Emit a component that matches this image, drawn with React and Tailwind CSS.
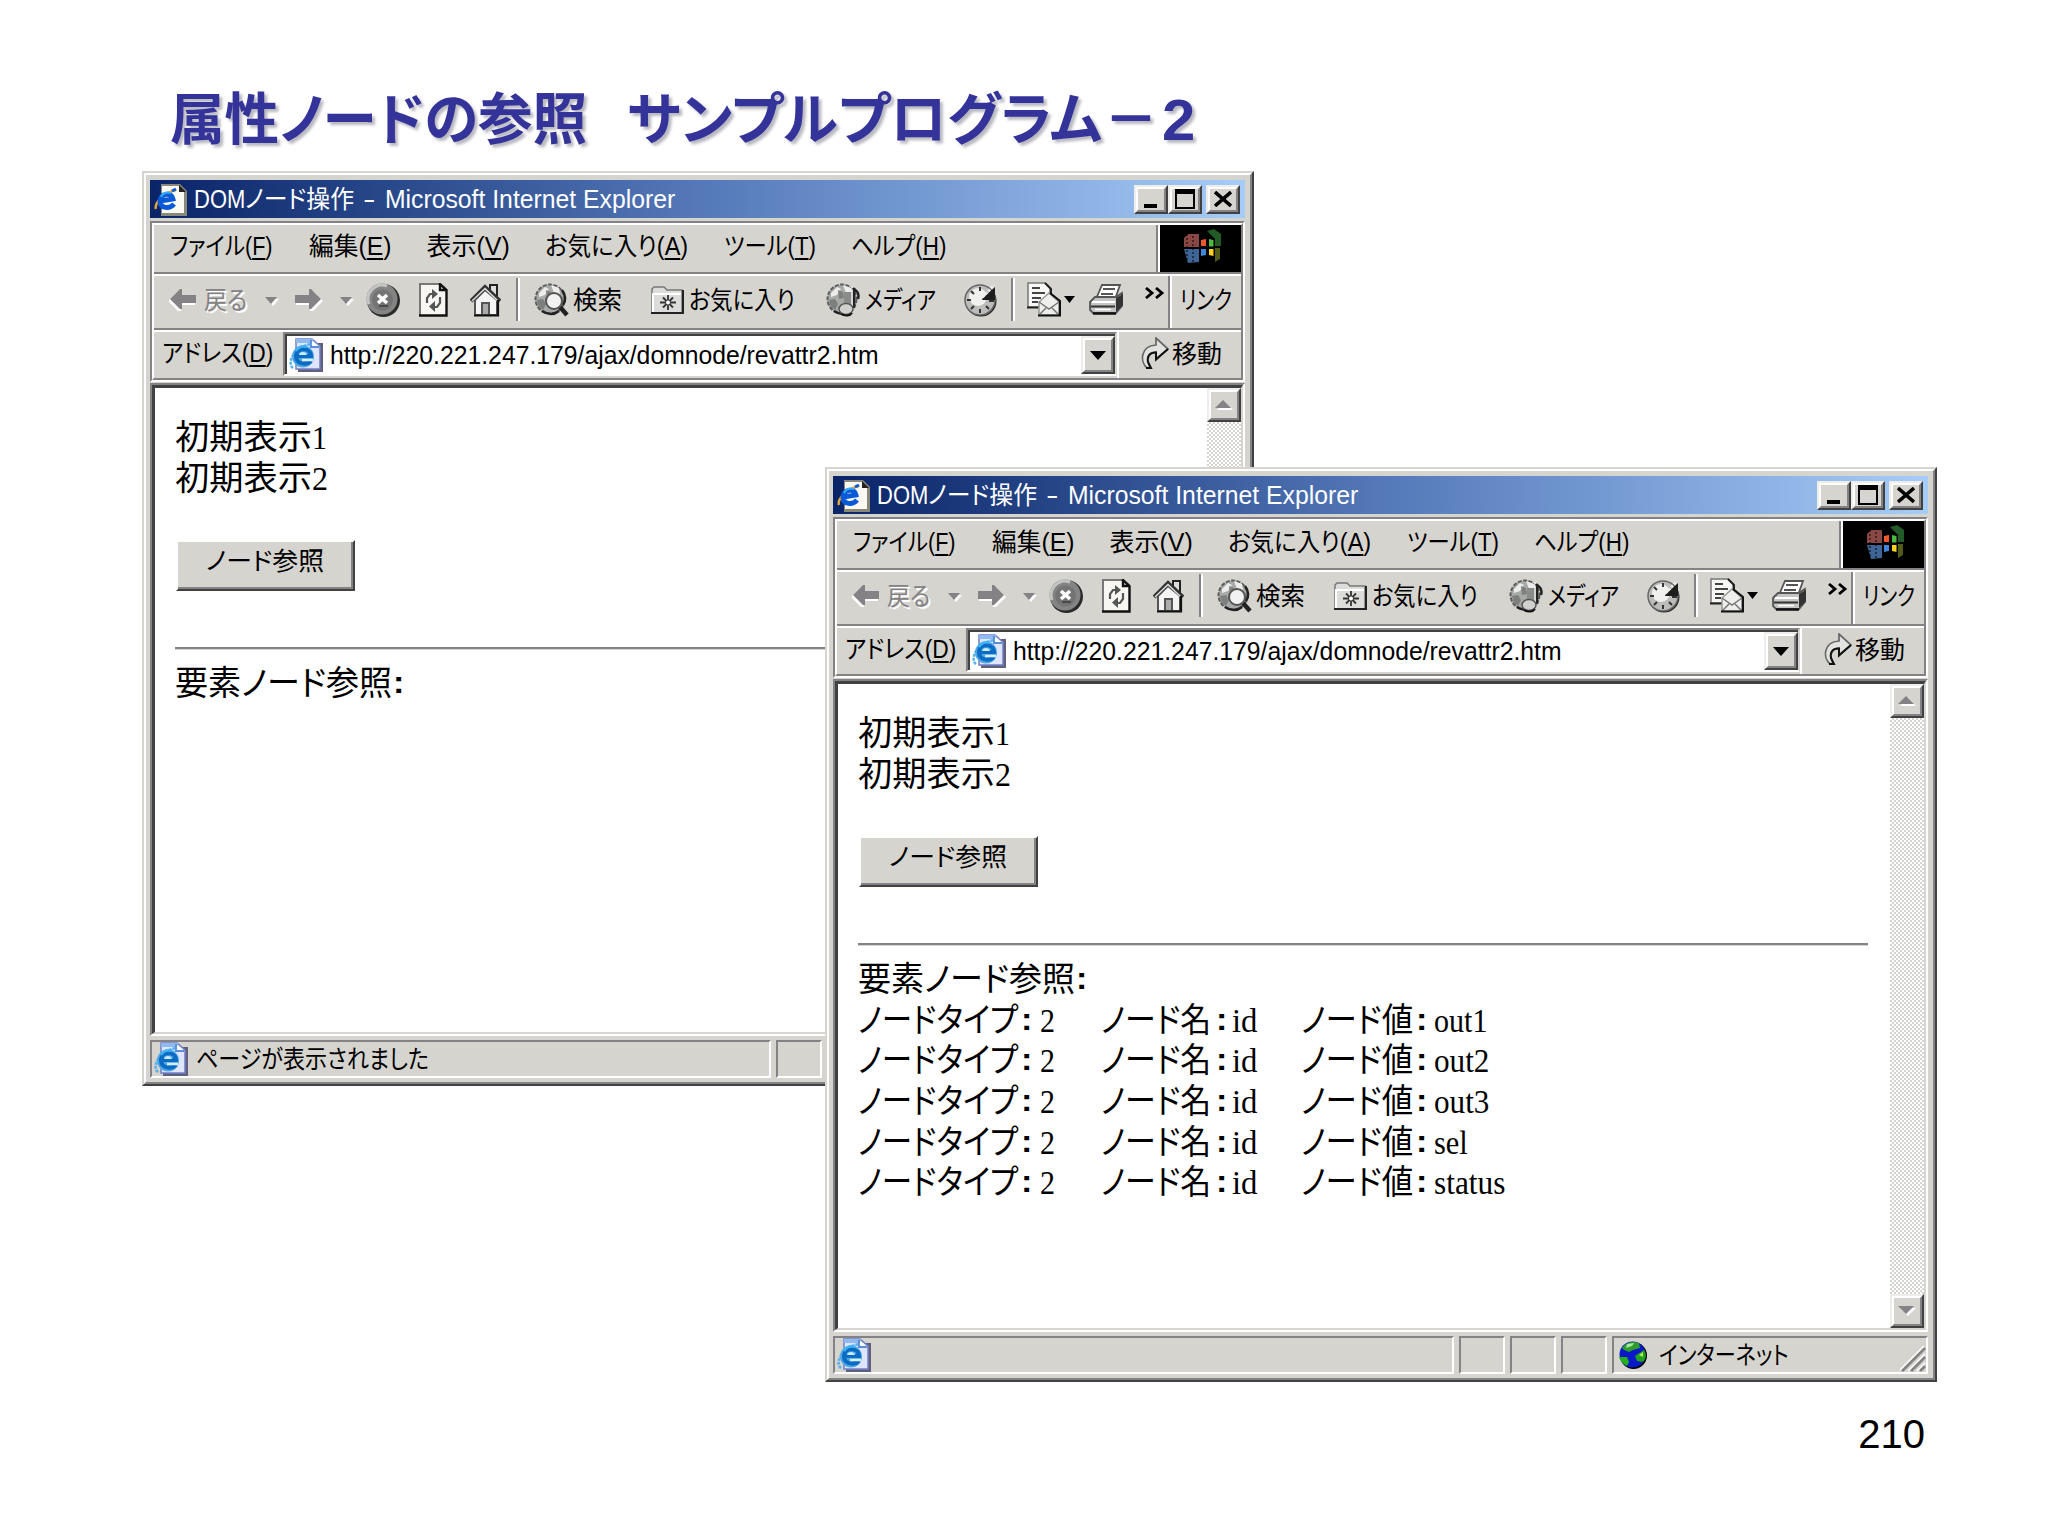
import { useLayoutEffect, useRef, useState } from 'react'

// stretches one run of text to a fixed width, like the narrow UI font does
function Fit({ w, className = '', children }) {
  const ref = useRef(null)
  const [scale, setScale] = useState(1)

  useLayoutEffect(() => {
    if (ref.current.offsetWidth) setScale(w / ref.current.offsetWidth)
  }, [w])

  return (
    <span className={`block shrink-0 whitespace-nowrap ${className}`} style={{ width: w }}>
      <span
        ref={ref}
        className="inline-block origin-left [font-feature-settings:'palt']"
        style={{ transform: `scaleX(${scale})` }}
      >
        {children}
      </span>
    </span>
  )
}

function Key({ children }) {
  return <span className="underline decoration-2 underline-offset-[3px]">{children}</span>
}

/* ---------- icons ---------- */

function PageIcon({ className = '' }) {
  return (
    <svg className={`shrink-0 ${className}`} width="34" height="34" viewBox="0 0 34 34">
      <path d="M9 5H34V34H9Z" fill="#625f78" />
      <path d="M7 1H23L31 8V31H7Z" fill="#dfe4ff" stroke="#6f7fc8" strokeWidth="1.5" />
      <path d="M7 1H24V5H7Z" fill="#8fbaf0" />
      <path d="M22 2V9H30" fill="#fff" stroke="#5a8fd6" strokeWidth="2" />
      <path d="M4 30C-2 26 3 9 23 6" fill="none" stroke="#58b0ee" strokeWidth="2.5" strokeDasharray="3 1" />
      <circle cx="14" cy="18.5" r="11" fill="#4fa8e6" />
      <path d="M7 18H22C22 9 7 9 7 18C7 27 18 27 22 23" fill="none" stroke="#0c6cc4" strokeWidth="4" />
      <path d="M10 17H18C17 13 11 13 10 17Z" fill="#c8ecff" />
      <path d="M13 22H24" stroke="#d4f0ff" strokeWidth="2.5" />
      <path d="M7 13C9 9 14 7 18 9" fill="none" stroke="#3cb4f4" strokeWidth="2.5" />
    </svg>
  )
}

function TitleIcon({ className = '' }) {
  return (
    <svg className={`shrink-0 ${className}`} width="34" height="34" viewBox="0 0 34 34">
      <path d="M7 1H26L33 8V33H7Z" fill="#8a8878" />
      <path d="M8 3H25V9H30V30H8Z" fill="#fbfaf2" />
      <path d="M25 2L32 9H25Z" fill="#222" />
      <path d="M2 26C0 20 10 10 22 7" fill="none" stroke="#e0a63c" strokeWidth="2.5" />
      <path d="M6 18L19 16C18 9 6 10 6 18C6 26 16 26 20 21" fill="none" stroke="#0a5ad8" strokeWidth="5" />
      <path d="M7 14C9 10 13 9 17 10" fill="none" stroke="#35b0f8" strokeWidth="2" />
      <path d="M18 8L22 6" stroke="#0a5ad8" strokeWidth="3" />
    </svg>
  )
}

function Arrow({ left, className = '' }) {
  return (
    <svg className={`shrink-0 ${className}`} width="28" height="24" viewBox="0 0 28 24">
      <g transform={left ? 'translate(27 0) scale(-1 1)' : undefined}>
        <path d="M1 9H15V3H18L28 13L18 23H15V17H1Z" fill="#fff" />
        <path d="M0 7H14V1H16L26 11L16 21H14V15H0Z" fill="#848284" />
      </g>
    </svg>
  )
}

function Drop({ className = '' }) {
  return (
    <svg className={`shrink-0 ${className}`} width="14" height="9" viewBox="0 0 14 9">
      <path d="M2 2H14L8 9Z" fill="#fff" />
      <path d="M0 0H12L6 7Z" fill="#848284" />
    </svg>
  )
}

function StopIcon() {
  return (
    <svg className="ml-3 shrink-0" width="34" height="34" viewBox="0 0 34 34">
      <circle cx="17.5" cy="17.5" r="16.5" fill="#2a2a2a" />
      <circle cx="16" cy="16" r="15.5" fill="#848484" />
      <path d="M3 21A14 14 0 0 1 21 3" fill="none" stroke="#c4c4c4" strokeWidth="3" />
      <circle cx="16.5" cy="17" r="10.5" fill="#747474" />
      <path d="M12 12L21 20M21 12L12 20" stroke="#fff" strokeWidth="3.5" />
      <path d="M13 23H22" stroke="#4a4a4a" strokeWidth="2" />
    </svg>
  )
}

function RefreshIcon() {
  return (
    <svg className="ml-[19px] shrink-0" width="29" height="34" viewBox="0 0 29 34">
      <path d="M1 1H21L27 7V32H1Z" fill="#f7f6f2" />
      <path d="M1 33V1H21" fill="none" stroke="#777" strokeWidth="2" />
      <path d="M0 32.5H27.5V7L21 1V7H27" fill="none" stroke="#111" strokeWidth="2.4" />
      <path d="M8 20V15L11 11H14" fill="none" stroke="#555" strokeWidth="2.2" />
      <path d="M13 6L19 11L13 16Z" fill="#555" />
      <path d="M21 14V20L18 24H15" fill="none" stroke="#555" strokeWidth="2.2" />
      <path d="M16 18L10 23.5L16 29Z" fill="#555" />
    </svg>
  )
}

function HomeIcon() {
  return (
    <svg className="ml-[22px] shrink-0" width="31" height="34" viewBox="0 0 31 34">
      <path d="M20 2H27V14H20Z" fill="#ddd" stroke="#222" strokeWidth="2" />
      <path d="M5 17L15 7L27 17V32H5Z" fill="#f4f4f4" stroke="#555" strokeWidth="2" />
      <path d="M1 18L15 4L30 18" fill="none" stroke="#333" strokeWidth="4" />
      <path d="M2 18L15 5.5L28 18" fill="none" stroke="#ddd" strokeWidth="1.5" />
      <path d="M12 20H19V32H12Z" fill="#aaa" stroke="#555" strokeWidth="2" />
      <path d="M4 32.5H28V17" fill="none" stroke="#111" strokeWidth="2.2" />
    </svg>
  )
}

function Globe() {
  return (
    <>
      <circle cx="16" cy="17" r="14.5" fill="#a8aaa7" stroke="#5c5c5c" strokeWidth="2" strokeDasharray="4 1.5" />
      <path d="M5 11L11 5L15 7L11 13L5 15ZM17 3L25 6L26 12L20 11Z" fill="#ececea" />
      <path d="M3 18L9 17L12 22L9 28L5 25Z" fill="#7c7f7d" />
      <path d="M12 8L17 10L18 16L13 17Z" fill="#7d807d" />
      <path d="M8 29C14 33 20 33 25 29" fill="none" stroke="#222" strokeWidth="2.5" />
    </>
  )
}

function SearchIcon() {
  return (
    <svg className="ml-3.5 shrink-0" width="35" height="35" viewBox="0 0 35 35">
      <Globe />
      <path d="M26 25L33 33" stroke="#222" strokeWidth="4.5" />
      <circle cx="20" cy="19" r="8" fill="#f2f2f2" stroke="#555" strokeWidth="2" />
      <path d="M28 8C32 13 32 19 29 23" fill="none" stroke="#222" strokeWidth="2.5" />
    </svg>
  )
}

function FolderIcon() {
  return (
    <svg className="ml-[29px] shrink-0" width="33" height="28" viewBox="0 0 33 28">
      <path d="M1 27V3L3 1H13L16 4H31V27Z" fill="#dcdcda" stroke="#777" strokeWidth="1.5" />
      <path d="M2 26V8H30" fill="none" stroke="#fff" strokeWidth="2" />
      <path d="M0 27H32V4" fill="none" stroke="#222" strokeWidth="2" />
      <path d="M17 9V24M9 16.5H25M12 11.5L22 21.5M22 11.5L12 21.5" stroke="#333" strokeWidth="1.8" />
      <circle cx="17" cy="16.5" r="2" fill="#fff" />
    </svg>
  )
}

function MediaIcon() {
  return (
    <svg className="ml-[31px] shrink-0" width="35" height="35" viewBox="0 0 35 35">
      <Globe />
      <path d="M18 10H26V24H18Z" fill="#8a8c8a" />
      <path d="M28 6V26" stroke="#222" strokeWidth="2.5" />
      <path d="M26 4V26" stroke="#eee" strokeWidth="1.5" />
      <path d="M27 6C29 9 34 9 32 17" fill="none" stroke="#222" strokeWidth="2.5" />
      <ellipse cx="20" cy="27" rx="7" ry="5.5" fill="#d0d0cd" stroke="#555" strokeWidth="1.5" />
      <path d="M15 32C19 34.5 24 34 26 31" fill="none" stroke="#111" strokeWidth="2" />
    </svg>
  )
}

function HistoryIcon() {
  return (
    <svg className="ml-7 shrink-0" width="34" height="34" viewBox="0 0 34 34">
      <circle cx="17" cy="18" r="15.5" fill="#222" />
      <circle cx="16" cy="17" r="15" fill="#bcbcba" stroke="#666" strokeWidth="1.5" />
      <circle cx="14" cy="14" r="9" fill="#f0f0ee" />
      <path d="M16 4V8M3 17H7M16 26V30M25 18H30M7 8L10 11M7 26L10 23M25 26L22 23" stroke="#333" strokeWidth="2" />
      <path d="M17 17L31 4V17Z" fill="#1d1d1d" />
      <path d="M16 17L30 2" stroke="#eee" strokeWidth="2.5" strokeDasharray="2.5 1.5" />
    </svg>
  )
}

function MailIcon() {
  return (
    <svg className="ml-3 shrink-0" width="34" height="35" viewBox="0 0 34 35">
      <path d="M1 1H18L23 6V25H1Z" fill="#f7f7f5" stroke="#777" strokeWidth="1.5" />
      <path d="M0 25.5H12M18 1L24 7V12" fill="none" stroke="#222" strokeWidth="2" />
      <path d="M5 6H13M5 11H18M5 16H14M5 20H11" stroke="#444" strokeWidth="2" />
      <path d="M12 33V20L22 11L32 20V33Z" fill="#eeeeec" stroke="#999" strokeWidth="1.5" />
      <path d="M12 20L22 27L32 20M12 33L19 26M32 33L25 26" fill="none" stroke="#777" strokeWidth="1.5" />
      <path d="M11 33.5H33V19L23 11" fill="none" stroke="#111" strokeWidth="2.2" />
    </svg>
  )
}

function PrinterIcon() {
  return (
    <svg className="ml-3.5 shrink-0" width="35" height="31" viewBox="0 0 35 31">
      <path d="M7 15L13 1H31L26 15Z" fill="#fff" stroke="#555" strokeWidth="1.8" />
      <path d="M14 5H26M12 10H24" stroke="#555" strokeWidth="1.8" />
      <path d="M1 18L6 13H27L33 9V22L27 29H4L1 26Z" fill="#c4c4c2" stroke="#555" strokeWidth="1.8" />
      <path d="M27 14L34 10V21L27 28Z" fill="#333" />
      <path d="M3 18H26" stroke="#fff" strokeWidth="2" />
      <path d="M2 22.5H26" stroke="#333" strokeWidth="2" />
      <path d="M6 25.5H22" stroke="#fff" strokeWidth="1.5" />
      <path d="M4 29.5H27" stroke="#111" strokeWidth="2.5" />
    </svg>
  )
}

function GoIcon() {
  return (
    <svg className="ml-[21px] shrink-0" width="29" height="33" viewBox="0 0 29 33">
      <path
        d="M7 31C0 25 0 9 16 8V1L28 12L16 22V15C9 15 7 20 8 25L10 31Z"
        fill="#e2e2e0"
        stroke="#666"
        strokeWidth="1.7"
      />
      <path d="M28 12L16 22.5V15.5C9 15.5 7 20 8 25L11 31H6" fill="none" stroke="#111" strokeWidth="2" />
    </svg>
  )
}

function Flag() {
  return (
    <svg width="81" height="47" viewBox="0 0 81 47">
      <g opacity="0.75">
        <path d="M24 13L28 9L39 9V22H24Z" fill="#b8605c" />
        <path d="M24 24H39V37L28 38Z" fill="#5486c8" />
        <path d="M47 6L54 4L61 9V21H55V14Z" fill="#2f7a34" />
        <path d="M55 23H60V34L55 37Z" fill="#6f7a20" />
      </g>
      <path d="M27 9V38M33 7V39" stroke="#000" strokeWidth="1" strokeDasharray="2 2" />
      <path d="M39 14C44 9 50 11 55 14V35C50 32 44 32 39 35Z" fill="#000" />
      <path d="M41 15L46 14V21H41Z" fill="#f2582e" />
      <path d="M49 14L53.5 15V21.5H49Z" fill="#4cba3e" />
      <path d="M41 24H46V30L41 31Z" fill="#3f86dd" />
      <path d="M49 24H53.5V31L49 30Z" fill="#ffd21e" />
    </svg>
  )
}

function EarthIcon() {
  return (
    <svg className="ml-[5px] shrink-0" width="28" height="28" viewBox="0 0 28 28">
      <circle cx="14.5" cy="14.5" r="13.5" fill="#000" />
      <circle cx="13.5" cy="13.5" r="13" fill="#0a18c8" />
      <path d="M3 7C7 1 14 0 20 2L21 7L14 9L10 11L5 9Z" fill="#2f9d2c" />
      <path d="M8 3L15 2L13 5L7 7Z" fill="#a6e8a0" />
      <path d="M25 9C28 13 27 18 24 21L18 20L16 15Z" fill="#1fa31c" />
      <path d="M0 16L8 16L10 21L8 25C4 23 1 20 0 16Z" fill="#25b020" />
      <path d="M20 14L24 11V16Z" fill="#b8e84a" />
    </svg>
  )
}

/* ---------- window parts ---------- */

function Bevel({ className = '', children }) {
  return (
    <div className={`flex shrink-0 border-2 border-[#efedea] border-r-[#424142] border-b-[#424142] bg-[#d6d4cf] ${className}`}>
      <div className="flex flex-1 items-center justify-center border-2 border-white border-r-[#848284] border-b-[#848284]">
        {children}
      </div>
    </div>
  )
}

function Separator({ className }) {
  return <div className={`h-[43px] w-1 shrink-0 border-l-2 border-r-2 border-l-[#848284] border-r-white ${className}`} />
}

function TitleBar() {
  return (
    <div className="flex h-[38px] items-center bg-linear-to-r from-[#0a2468] via-[#5478b8] via-50% to-[#a6ccf8] pr-[5px] pl-1 text-[25px] text-white">
      <TitleIcon className="mt-0.5" />
      <Fit w={51} className="ml-1.5">DOM</Fit>
      <Fit w={109}>ノード操作</Fit>
      <Fit w={12} className="ml-[9px]">-</Fit>
      <Fit w={290} className="ml-2.5">Microsoft Internet Explorer</Fit>
      <Bevel className="ml-auto h-[29px] w-[34px]">
        <div className="mt-3.5 mr-0.5 h-1 w-[13px] bg-black" />
      </Bevel>
      <Bevel className="h-[29px] w-[34px]">
        <div className="h-5 w-5 border-2 border-t-[5px] border-black" />
      </Bevel>
      <Bevel className="ml-1 h-[29px] w-[34px]">
        <svg width="18" height="16" viewBox="0 0 18 16">
          <path d="M1 1L17 15M17 1L1 15" stroke="#000" strokeWidth="3.5" />
        </svg>
      </Bevel>
    </div>
  )
}

const MENU = [
  ['ファイル', 'F', 103],
  ['編集', 'E', 82],
  ['表示', 'V', 83],
  ['お気に入り', 'A', 143],
  ['ツール', 'T', 92],
  ['ヘルプ', 'H', 95],
]

function MenuBar() {
  return (
    <div className="flex h-[49px] border-b-2 border-[#848284] shadow-[0_2px_0_#fff]">
      <div className="flex flex-1 items-center gap-[35.7px] border-r-2 border-[#848284] pb-1.5 pl-4">
        {MENU.map(([label, key, w]) => (
          <Fit key={key} w={w}>
            {label}(<Key>{key}</Key>)
          </Fit>
        ))}
      </div>
      <div className="w-[83px] border-l-2 border-white bg-black">
        <Flag />
      </div>
    </div>
  )
}

function ToolBar() {
  return (
    <div className="mt-0.5 flex h-[54px] border-b-2 border-[#848284] shadow-[0_2px_0_#fff]">
      <div className="flex w-[1016px] items-center border-r-2 border-[#848284] pb-[5px]">
        <Arrow left className="ml-[15px]" />
        <Fit w={43} className="ml-[7px] text-[#848284] [text-shadow:2px_2px_0_#fff]">戻る</Fit>
        <Drop className="mt-1 ml-[18px]" />
        <Arrow className="ml-4" />
        <Drop className="mt-1 ml-[17px]" />
        <StopIcon />
        <RefreshIcon />
        <HomeIcon />
        <Separator className="ml-[15px]" />
        <SearchIcon />
        <Fit w={49} className="ml-1">検索</Fit>
        <FolderIcon />
        <Fit w={106} className="ml-[5px]">お気に入り</Fit>
        <MediaIcon />
        <Fit w={71} className="ml-1">メディア</Fit>
        <HistoryIcon />
        <Separator className="ml-[13px]" />
        <MailIcon />
        <svg className="ml-[3px] shrink-0" width="11" height="7" viewBox="0 0 11 7">
          <path d="M0 0H11L5.5 7Z" fill="#000" />
        </svg>
        <PrinterIcon />
        <svg className="mb-3.5 ml-[21px] shrink-0" width="20" height="12" viewBox="0 0 20 12">
          <path d="M1 1L7 6L1 11M11 1L17 6L11 11" fill="none" stroke="#000" strokeWidth="2.8" />
        </svg>
      </div>
      <div className="flex flex-1 items-center border-l-2 border-white pb-[5px] pl-2">
        <Fit w={52}>リンク</Fit>
      </div>
    </div>
  )
}

function AddressBar() {
  return (
    <div className="mt-0.5 flex h-[46px] items-start">
      <Fit w={111} className="mt-1 ml-2">
        アドレス(<Key>D</Key>)
      </Fit>
      <div className="ml-2.5 flex h-11 w-[834px] shrink-0 items-center border-2 border-[#848284] border-r-[#d6d4cf] border-b-white bg-white">
        <div className="flex h-10 flex-1 items-center border-t-2 border-l-2 border-[#424142]">
          <PageIcon className="ml-0.5" />
          <Fit w={549} className="ml-[7px]">http://220.221.247.179/ajax/domnode/revattr2.htm</Fit>
          <Bevel className="ml-auto h-[38px] w-[34px]">
            <svg width="16" height="9" viewBox="0 0 16 9">
              <path d="M0 0H16L8 9Z" fill="#000" />
            </svg>
          </Bevel>
        </div>
      </div>
      <div className="flex h-[46px] flex-1 items-center border-l-2 border-white pb-[3px]">
        <GoIcon />
        <Fit w={50} className="ml-[3px]">移動</Fit>
      </div>
    </div>
  )
}

function ScrollBar() {
  return (
    <div className="flex w-[34px] shrink-0 flex-col justify-between bg-[repeating-conic-gradient(#ffffff_0_25%,#d6d4cf_0_50%)] bg-[length:4px_4px]">
      <Bevel className="h-[34px] w-[34px]">
        <svg width="18" height="12" viewBox="0 0 18 12">
          <path d="M2 11L10 3L18 11Z" fill="#fff" />
          <path d="M0 9L8 1L16 9Z" fill="#848284" />
        </svg>
      </Bevel>
      <Bevel className="h-[34px] w-[34px]">
        <svg width="18" height="12" viewBox="0 0 18 12">
          <path d="M2 3H18L10 11Z" fill="#fff" />
          <path d="M0 1H16L8 9Z" fill="#848284" />
        </svg>
      </Bevel>
    </div>
  )
}

function Latin({ w, className = '', children }) {
  return (
    <Fit w={w} className={`translate-y-px [font-family:'Liberation_Serif',serif] ${className}`}>
      {children}
    </Fit>
  )
}

function Colon({ className }) {
  return <Fit w={11} className={`text-[31px] font-bold ${className}`}>:</Fit>
}

function Row({ value: [text, w] }) {
  return (
    <div className="flex">
      <Fit w={160}>ノードタイプ</Fit>
      <Colon className="ml-[3px]" />
      <Latin w={15} className="ml-2">2</Latin>
      <Fit w={110} className="ml-[46px]">ノード名</Fit>
      <Colon className="ml-[5px]" />
      <Latin w={25} className="ml-[5px]">id</Latin>
      <Fit w={112} className="ml-[44px]">ノード値</Fit>
      <Colon className="ml-[3px]" />
      <Latin w={w} className="ml-[7px]">{text}</Latin>
    </div>
  )
}

function Page({ rows }) {
  return (
    <div className="flex-1 pt-[29px] pl-5 text-[34px] leading-[40.6px]">
      <div className="flex">
        <Fit w={137}>初期表示</Fit>
        <Latin w={15}>1</Latin>
      </div>
      <div className="flex">
        <Fit w={137}>初期表示</Fit>
        <Latin w={16}>2</Latin>
      </div>
      <div className="mt-[42px] ml-px flex h-[51px] w-[179px] border-2 border-white border-r-[#424142] border-b-[#424142] bg-[#d6d4cf]">
        <div className="flex flex-1 justify-center border-r-2 border-b-2 border-[#848284]">
          <Fit w={118} className="text-[25px] leading-[38px]">ノード参照</Fit>
        </div>
      </div>
      <div className="mt-14 h-[3px] w-[1010px] border-t-2 border-[#848284] bg-[#d6d4cf]" />
      <div className="mt-[13px] flex">
        <Fit w={217}>要素ノード参照</Fit>
        <Colon className="ml-px" />
      </div>
      {rows.map((value) => (
        <Row key={value[0]} value={value} />
      ))}
    </div>
  )
}

function Pane({ className, children }) {
  return (
    <div className={`flex h-[38px] shrink-0 items-center border-2 border-[#848284] border-r-white border-b-white ${className}`}>
      {children}
    </div>
  )
}

function StatusBar({ message, zone }) {
  return (
    <div className="mt-1 flex">
      <Pane className="w-[621px] pl-0.5">
        <PageIcon />
        {message && <Fit w={233} className="ml-2">{message}</Fit>}
      </Pane>
      <Pane className="ml-[5px] w-[46px]" />
      <Pane className="ml-[5px] w-[46px]" />
      <Pane className="ml-[5px] w-[46px]" />
      <Pane className="ml-[5px] w-[316px]">
        {zone && (
          <>
            <EarthIcon />
            <Fit w={130} className="ml-3">{zone}</Fit>
          </>
        )}
        <svg className="ml-auto self-end" width="26" height="26" viewBox="0 0 26 26">
          <path d="M2 25L25 2M11 25L25 11M20 25L25 20" stroke="#848284" strokeWidth="3" />
          <path d="M0 24L24 0M8 25L25 8M17 25L25 17" stroke="#fff" strokeWidth="1.5" />
        </svg>
      </Pane>
    </div>
  )
}

function BrowserWindow({ className, rows = [], message, zone }) {
  return (
    <div className={`absolute h-[915px] w-[1112px] border-2 border-[#d6d4cf] border-r-[#424142] border-b-[#424142] ${className}`}>
      <div className="h-full border-2 border-white border-r-[#848284] border-b-[#848284] bg-[#d6d4cf] pt-[5px] pr-[5px] pl-1 text-[25px] leading-[34px] text-black">
        <TitleBar />
        <div className="mt-[3px] border-2 border-[#848284] border-r-white border-b-white">
          <div className="border-2 border-white border-r-[#848284] border-b-[#848284]">
            <MenuBar />
            <ToolBar />
            <AddressBar />
          </div>
        </div>
        <div className="mt-px h-[653px] border-2 border-[#848284] border-r-white border-b-white">
          <div className="flex h-full border-t-[3px] border-r-2 border-b-2 border-l-[3px] border-[#424142] border-r-[#d6d4cf] border-b-[#d6d4cf] bg-white">
            <Page rows={rows} />
            <ScrollBar />
          </div>
        </div>
        <StatusBar message={message} zone={zone} />
      </div>
    </div>
  )
}

const ROWS = [
  ['out1', 53],
  ['out2', 55],
  ['out3', 55],
  ['sel', 34],
  ['status', 71],
]

export default function App() {
  return (
    <div className="relative h-[1536px] w-[2048px] overflow-hidden bg-white [font-family:'Liberation_Sans','Noto_Sans_CJK_JP',sans-serif]">
      <h1 className="flex pt-[78px] pl-[170px] text-[56px] leading-[84px] font-bold text-[#333399] [text-shadow:3px_3px_3px_#b8b8c0]">
        <Fit w={417}>属性ノードの参照</Fit>
        <Fit w={475} className="ml-10">サンプルプログラム</Fit>
        <Fit w={54} className="ml-0.5">－</Fit>
        <Fit w={33} className="ml-1 text-[58px]">2</Fit>
      </h1>

      <BrowserWindow className="top-[171px] left-[142px]" message="ページが表示されました" />
      <BrowserWindow className="top-[467px] left-[825px]" rows={ROWS} zone="インターネット" />

      <div className="absolute top-[1404px] right-[123px] text-[40px] leading-[60px] text-black">210</div>
    </div>
  )
}
